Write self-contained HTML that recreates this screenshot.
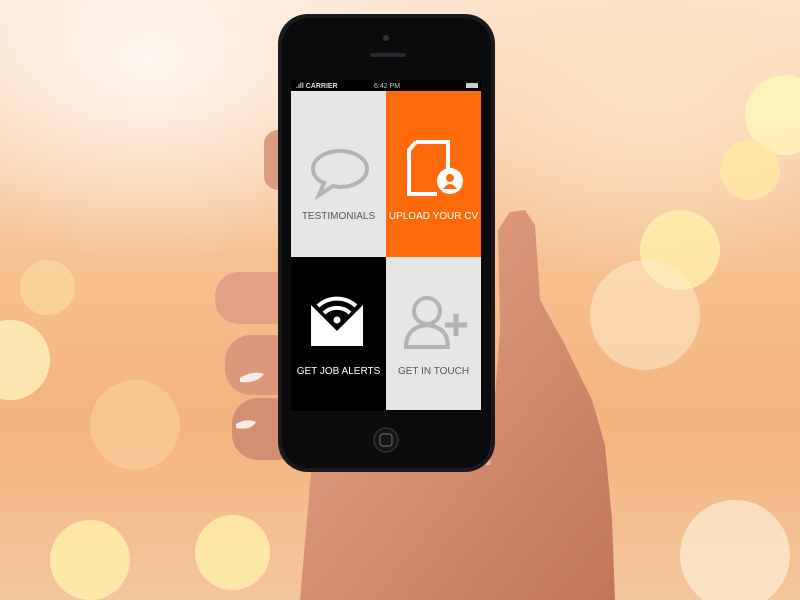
<!DOCTYPE html>
<html style="background:#f4c69c"><head><style>
html,body{margin:0;width:800px;height:600px;overflow:hidden}
body{position:relative;font-family:"Liberation Sans",sans-serif;
background:radial-gradient(ellipse 300px 200px at 150px 60px,#fff6ee 0%,rgba(255,240,225,0) 100%),
radial-gradient(ellipse 250px 200px at 650px 80px,#fde2c4 0%,rgba(253,226,196,0) 100%),
linear-gradient(180deg,#fbe4cf 0%,#f6c08f 45%,#f3b47e 70%,#f4c69c 100%);}
.b{position:absolute;border-radius:50%;}
.t{position:absolute;display:flex;flex-direction:column;align-items:center;justify-content:flex-end;font-size:10px;}
</style></head><body>
<div class="b" style="left:-30px;top:320px;width:80px;height:80px;background:rgba(255,245,190,.75)"></div>
<div class="b" style="left:20px;top:260px;width:55px;height:55px;background:rgba(255,230,170,.5)"></div>
<div class="b" style="left:50px;top:520px;width:80px;height:80px;background:rgba(255,240,170,.8)"></div>
<div class="b" style="left:195px;top:515px;width:75px;height:75px;background:rgba(255,240,170,.8)"></div>
<div class="b" style="left:745px;top:75px;width:80px;height:80px;background:rgba(255,245,185,.85)"></div>
<div class="b" style="left:720px;top:140px;width:60px;height:60px;background:rgba(255,235,160,.7)"></div>
<div class="b" style="left:640px;top:210px;width:80px;height:80px;background:rgba(255,240,170,.8)"></div>
<div class="b" style="left:590px;top:260px;width:110px;height:110px;background:rgba(255,235,200,.55)"></div>
<div class="b" style="left:680px;top:500px;width:110px;height:110px;background:rgba(255,245,225,.6)"></div>
<div class="b" style="left:90px;top:380px;width:90px;height:90px;background:rgba(255,220,170,.4)"></div>
<svg style="position:absolute;left:0;top:0" width="800" height="600">
<defs><linearGradient id="sk" x1="0" y1="0" x2="1" y2="1"><stop offset="0" stop-color="#e8a88a"/><stop offset="1" stop-color="#c07658"/></linearGradient></defs>
<path fill="url(#sk)" d="M300 600 L312 462 L490 465 L500 330 L498 230 L510 212 L525 210 L535 225 L540 300 L565 345 L592 400 L605 445 L612 520 L615 600 Z"/>
<rect x="264" y="130" width="30" height="60" rx="14" fill="#dc9c80"/>
<rect x="215" y="272" width="85" height="52" rx="24" fill="#e2a084"/>
<rect x="225" y="335" width="75" height="60" rx="26" fill="#dc987b"/>
<rect x="232" y="398" width="70" height="62" rx="26" fill="#d38f72"/>
<path d="M240 378 q12 -8 24 -4 q-8 10 -24 8z M236 424 q10 -6 20 -2 q-5 9 -20 6z" fill="#f6ece8"/>
<rect x="278" y="14" width="217" height="458" rx="30" fill="#1a1a1c"/>
<rect x="282" y="18" width="209" height="450" rx="27" fill="#0b0b0d"/>
<circle cx="386" cy="38" r="3" fill="#333"/>
<rect x="370" y="53" width="36" height="4" rx="2" fill="#2a2a2e"/>
<circle cx="386" cy="440" r="12" fill="#151517" stroke="#333" stroke-width="1.5"/>
<rect x="380" y="434" width="12" height="12" rx="3" fill="none" stroke="#666" stroke-width="1.2"/>
<rect x="291" y="80" width="190" height="331" fill="#000"/>
<text x="296" y="88" fill="#ddd" font-size="7" font-weight="bold" font-family="Liberation Sans">.ıll CARRIER</text>
<text x="374" y="88" fill="#ccc" font-size="7" font-family="Liberation Sans">6:42 PM</text>
<rect x="466" y="83" width="12" height="5" fill="#ccc"/>
<rect x="291" y="91" width="95" height="166" fill="#e6e6e6"/>
<rect x="386" y="91" width="95" height="166" fill="#ff6a0a"/>
<rect x="386" y="257" width="95" height="153" fill="#e6e6e6"/>
<path d="M340 151 c-15 0 -27 8 -27 18 c0 6 4 11 11 14 l-5 12 l14 -9 c2 0 4 1 7 1 c15 0 27 -8 27 -18 s-12 -18 -27 -18z" fill="none" stroke="#b3b3b3" stroke-width="4"/>
<path d="M416 142 h32 v30 M416 142 l-7 8 v44 h28" fill="none" stroke="#fff" stroke-width="4"/>
<circle cx="450" cy="181" r="13" fill="#fff"/>
<circle cx="450" cy="178" r="4" fill="#ff6a0a"/><path d="M443 189 q7 -10 14 0z" fill="#ff6a0a"/>
<path d="M311 305 l26 26 l26 -26 v41 h-52z" fill="#fff"/>
<path d="M318 306 a28 28 0 0 1 38 0 M324 313 a19 19 0 0 1 26 0" fill="none" stroke="#fff" stroke-width="4"/>
<circle cx="337" cy="320" r="3.5" fill="#fff"/>
<circle cx="427" cy="311" r="13" fill="none" stroke="#b3b3b3" stroke-width="4"/>
<path d="M406 347 q0 -20 21 -22 q21 2 21 22 z" fill="none" stroke="#b3b3b3" stroke-width="4"/>
<path d="M456 314 v22 M445 325 h22" stroke="#b3b3b3" stroke-width="5"/>
</svg>
<div class="t" style="left:291px;top:211px;width:95px;color:#555">TESTIMONIALS</div>
<div class="t" style="left:386px;top:211px;width:95px;color:#fff">UPLOAD YOUR CV</div>
<div class="t" style="left:291px;top:366px;width:95px;color:#fff">GET JOB ALERTS</div>
<div class="t" style="left:386px;top:366px;width:95px;color:#555">GET IN TOUCH</div>
</body></html>
